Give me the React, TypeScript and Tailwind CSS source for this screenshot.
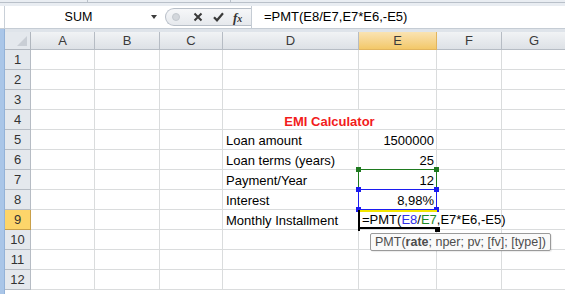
import React from "react";

const cols = ["A", "B", "C", "D", "E", "F", "G"];
const rows = [1, 2, 3, 4, 5, 6, 7, 8, 9, 10, 11, 12];

const labels: Record<number, string> = {
  5: "Loan amount",
  6: "Loan terms (years)",
  7: "Payment/Year",
  8: "Interest",
  9: "Monthly Installment",
};

const values: Record<number, string> = {
  5: "1500000",
  6: "25",
  7: "12",
  8: "8,98%",
};

const Handle = ({ className }: { className: string }) => (
  <span className={`absolute w-[5px] h-[5px] ${className}`} />
);

const FormulaText = () => (
  <>
    =PMT(<span className="text-[#3030e8]">E8</span>/
    <span className="text-[#1e8a24]">E7</span>,E7*E6,-E5)
  </>
);

const Cell = ({ row, col }: { row: number; col: string }) => {
  const base =
    "relative flex items-end border-r border-b border-[#dadcdd] text-[13px] leading-[15px]";

  if (row === 4 && col === "D") {
    return (
      <div className={`${base} col-span-2 justify-center font-bold text-[#f21c1c]`}>
        EMI Calculator
      </div>
    );
  }

  if (col === "D" && labels[row]) {
    return (
      <div className={`${base} pl-[3px] pb-px whitespace-nowrap text-black text-[13.5px]`}>
        {labels[row]}
      </div>
    );
  }

  if (col === "E" && values[row]) {
    return (
      <div className={`${base} justify-end pr-[2px] pb-px text-black`}>
        {values[row]}
        {row === 7 && (
          <span className="absolute -left-px -top-px w-[79px] h-[21px] border border-[#1f7a1f] z-10">
            <Handle className="-left-[3px] -top-[3px] bg-[#1f7a1f]" />
            <Handle className="-right-[3px] -top-[3px] bg-[#1f7a1f]" />
            <Handle className="-left-[3px] -bottom-[3px] bg-[#1f7a1f]" />
            <Handle className="-right-[3px] -bottom-[3px] bg-[#1f7a1f]" />
          </span>
        )}
        {row === 8 && (
          <span className="absolute -left-px -top-px w-[79px] h-[21px] border border-[#1c1cf0] z-20">
            <Handle className="-left-[3px] -top-[3px] bg-[#1c1cf0]" />
            <Handle className="-right-[3px] -top-[3px] bg-[#1c1cf0]" />
            <Handle className="-left-[3px] -bottom-[3px] bg-[#1c1cf0]" />
            <Handle className="-right-[3px] -bottom-[3px] bg-[#1c1cf0]" />
          </span>
        )}
      </div>
    );
  }

  if (row === 9 && col === "E") {
    return (
      <div className="relative flex items-end border-b border-[#dadcdd] text-[13px] leading-[15px] text-black z-30">
        <span className="absolute -left-px top-0 w-[79px] h-[2px] bg-[#f2e600]" />
        <span className="absolute -left-px top-0 w-[2px] h-[21px] bg-black" />
        <span className="absolute -left-px bottom-0 w-[79px] h-[2px] bg-black" />
        <span className="absolute left-[76px] -bottom-[3px] w-[5px] h-[5px] bg-black" />
        <span className="pl-[3px] pb-[2px] whitespace-nowrap">
          <FormulaText />
        </span>
        <div className="absolute left-[11px] top-[23px] h-[18px] px-[4px] flex items-center rounded-[2px] border border-[#9a9a9a] bg-[#fafafa] text-[12.5px] text-[#4d4d4d] whitespace-nowrap shadow-[1px_1px_1px_rgba(0,0,0,0.08)]">
          PMT(<b className="font-bold">rate</b>; nper; pv; [fv]; [type])
        </div>
      </div>
    );
  }

  return <div className={base} />;
};

const App = () => {
  return (
    <div className="w-[565px] h-[294px] overflow-hidden bg-white flex flex-col font-['Liberation_Sans',Arial,sans-serif] select-none">
      {/* ribbon edge */}
      <div className="h-[6px] bg-[#e9edf2] flex">
        <div className="w-[88px] h-[3px] border-r border-b border-[#b9c0c9]" />
        <div className="w-[143px] h-[3px] border-r border-b border-[#b9c0c9]" />
        <div className="flex-1 h-[3px] border-b border-[#b9c0c9]" />
      </div>

      {/* formula bar */}
      <div className="h-[23px] flex bg-white border-b border-[#c5ccd4]">
        <div className="w-[5px] border-r border-[#c9d0d8]" />
        <div className="w-[160px] flex items-center relative">
          <span className="flex-1 text-center text-[12.5px] text-black pl-[1px]">SUM</span>
          <span className="w-0 h-0 mr-[8px] border-l-[3px] border-r-[3px] border-t-[4px] border-l-transparent border-r-transparent border-t-[#3c3c3c]" />
        </div>
        <div className="w-[86px] my-[2px] flex items-center rounded-l-full border border-r-0 border-[#b8bfc8] bg-linear-to-b from-[#f6f7f9] to-[#e6e9ed]">
          <span className="ml-[6px] w-[8px] h-[8px] rounded-full bg-[#d3d7dc] border border-[#c3c8ce]" />
          <svg className="ml-[13px]" width="10" height="10" viewBox="0 0 10 10">
            <path d="M1.5 1.5 L8.5 8.5 M8.5 1.5 L1.5 8.5" stroke="#3a3a3a" strokeWidth="2" />
          </svg>
          <svg className="ml-[10px]" width="11" height="10" viewBox="0 0 11 10">
            <path d="M1 5.2 L4 8.3 L10 1.2" stroke="#3a3a3a" strokeWidth="2.2" fill="none" />
          </svg>
          <span className="ml-[9px] font-['Liberation_Serif',serif] italic font-bold text-[13px] text-[#333] leading-none">
            f<span className="text-[10px]">x</span>
          </span>
        </div>
        <div className="flex-1 flex items-center pl-[12px] text-[13px] text-black whitespace-nowrap border-l border-[#c5ccd4]">
          =PMT(E8/E7,E7*E6,-E5)
        </div>
      </div>

      <div className="flex-1 flex min-h-0">
        <div className="w-[5px] bg-[#aac6e8] border-r border-[#93b2d8]" />
        <div className="flex-1 flex flex-col min-w-0">
          <div className="h-[3px] bg-[#dfe4ea]" />
          <div className="grid grid-cols-[26px_64px_65px_63px_136px_78px_65px_65px] grid-rows-[18px_repeat(12,20px)]">
            {/* corner */}
            <div className="relative border-r border-b border-[#b0b6be] bg-[#e4e8ed]">
              <svg className="absolute right-[3px] bottom-[3px]" width="10" height="10" viewBox="0 0 10 10">
                <path d="M10 0 L10 10 L0 10 Z" fill="#c9ced5" />
              </svg>
            </div>
            {cols.map((c) =>
              c === "E" ? (
                <div
                  key={c}
                  className="flex items-center justify-center border-r border-b border-[#e2b55e] bg-linear-to-b from-[#fae3b2] to-[#f3c868] text-[13px] text-[#3b3b3b]"
                >
                  {c}
                </div>
              ) : (
                <div
                  key={c}
                  className="flex items-center justify-center border-r border-b border-[#b6bcc4] bg-linear-to-b from-[#f1f3f5] to-[#dde1e6] text-[13px] text-[#3b3b3b]"
                >
                  {c}
                </div>
              )
            )}
            {rows.map((r) => (
              <React.Fragment key={r}>
                {r === 9 ? (
                  <div className="flex items-center justify-center border-r border-b border-[#c9a04a] bg-[#fdd56a] text-[13px] text-[#333]">
                    {r}
                  </div>
                ) : (
                  <div className="flex items-center justify-center border-r border-b border-[#b6bcc4] bg-[#e4e8ed] text-[13px] text-[#333]">
                    {r}
                  </div>
                )}
                {cols.map((c) =>
                  r === 4 && c === "E" ? null : <Cell key={c} row={r} col={c} />
                )}
              </React.Fragment>
            ))}
          </div>
        </div>
      </div>
    </div>
  );
};

export default App;
